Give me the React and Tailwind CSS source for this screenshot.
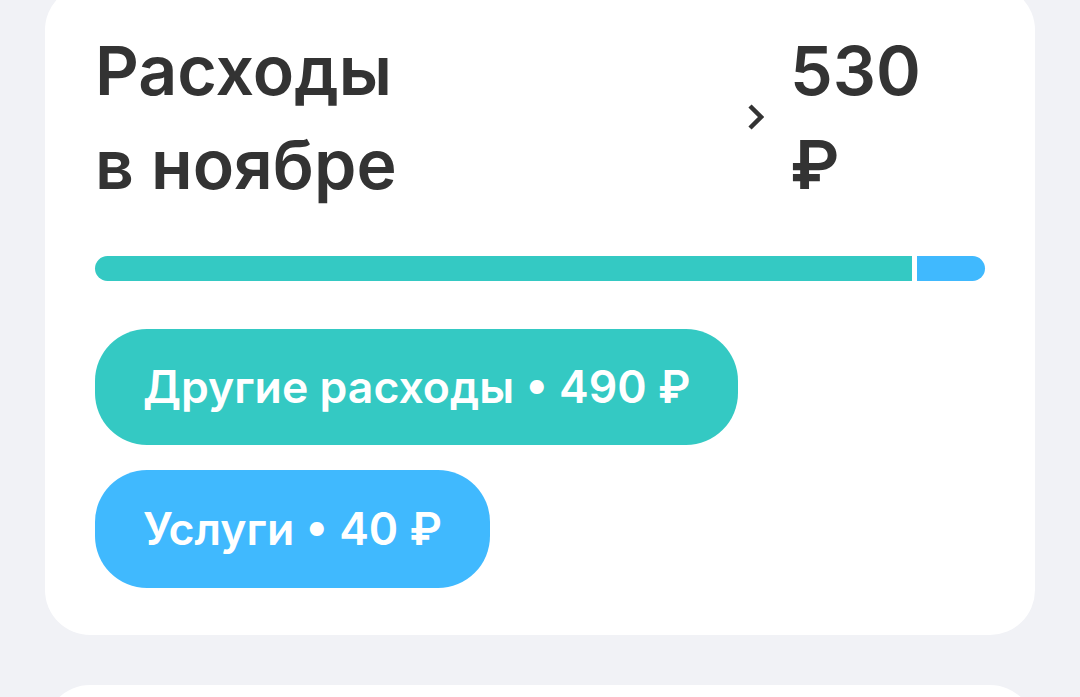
export default function App() {
  return (
    <div className="min-h-screen w-full overflow-hidden bg-[#f1f2f6] px-[45px]" style={{ fontFamily: 'Inter, Roboto, "Liberation Sans", sans-serif' }}>
      <div className="-mt-[15px] rounded-[45px] bg-white pt-[38px] pr-[50px] pl-[50px] pb-[47px]">
        <div className="flex items-start">
          <div className="w-[320px] text-[68px] font-semibold leading-[94px] text-[#333333]">
            Расходы в ноябре
          </div>
          <div className="ml-auto mr-[45px] flex items-center">
            <svg width="17" height="28" viewBox="0 0 17 28" className="mr-[26px]">
              <path d="M3 3 L14 14 L3 25" fill="none" stroke="#333333" strokeWidth="4.5" strokeLinecap="butt" strokeLinejoin="miter" />
            </svg>
            <div className="w-[150px] text-[68px] font-semibold leading-[94px] text-[#333333]">530 ₽</div>
          </div>
        </div>
        <div className="mt-[45px] flex h-[25px] gap-[5px]">
          <div className="h-full flex-1 rounded-l-full bg-[#34c9c3]" />
          <div className="h-full w-[68px] rounded-r-full bg-[#40b9fe]" />
        </div>
        <div className="mt-[48px] flex flex-col items-start gap-[25px]">
          <div className="flex h-[116px] items-center rounded-[52px] bg-[#34c9c3] px-[48px] text-[44.6px] font-semibold text-white">
            Другие расходы • 490 ₽
          </div>
          <div className="flex h-[118px] items-center rounded-[52px] bg-[#40b9fe] px-[48px] text-[44.6px] font-semibold text-white">
            Услуги • 40 ₽
          </div>
        </div>
      </div>
      <div className="mt-[50px] h-[120px] rounded-[45px] bg-white" />
    </div>
  );
}
